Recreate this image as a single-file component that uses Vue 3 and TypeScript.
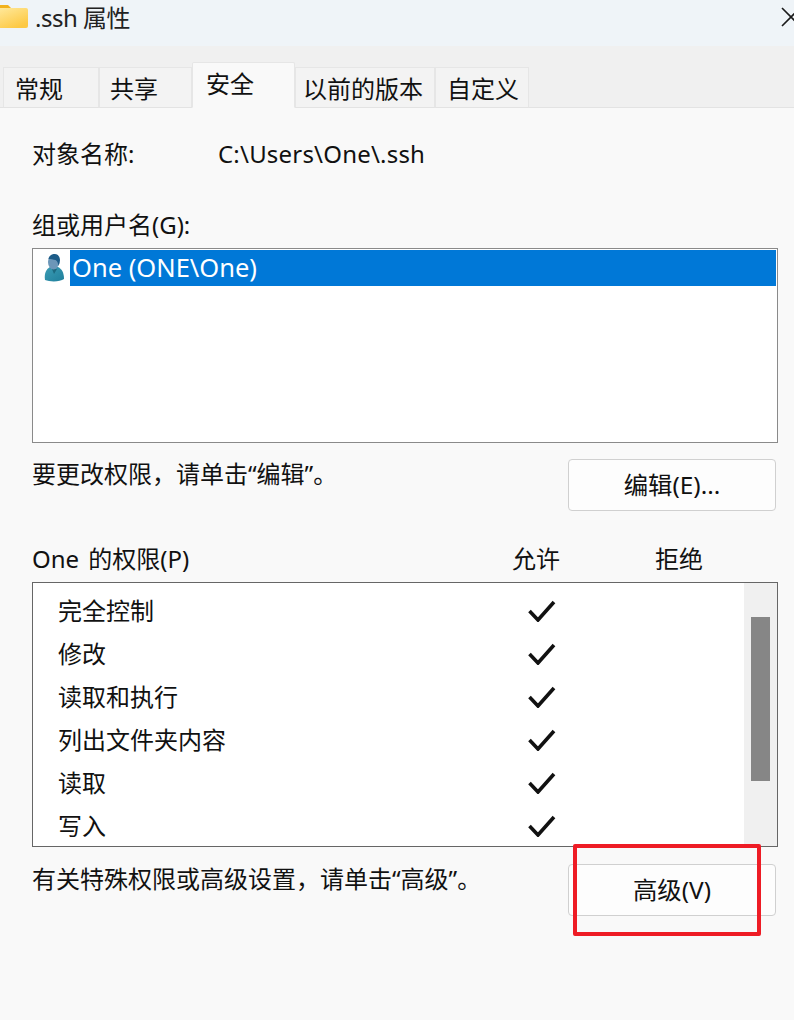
<script setup lang="ts">
interface Tab {
  label: string;
  width: number;
  pad: number;
  active?: boolean;
}

const tabs: Tab[] = [
  { label: '常规', width: 96, pad: 11 },
  { label: '共享', width: 93, pad: 10 },
  { label: '安全', width: 103, pad: 13, active: true },
  { label: '以前的版本', width: 140, pad: 7 },
  { label: '自定义', width: 94, pad: 11 }
];

const permissions: string[] = ['完全控制', '修改', '读取和执行', '列出文件夹内容', '读取', '写入'];
</script>

<template>
  <div class="dialog">
    <header class="titlebar">
      <svg class="folder" width="28" height="24" viewBox="0 0 28 24">
        <defs>
          <linearGradient id="fold" x1="0" y1="0" x2="0.6" y2="1">
            <stop offset="0" stop-color="#ffe99c" />
            <stop offset="1" stop-color="#fdc944" />
          </linearGradient>
        </defs>
        <path d="M0 0h8l4 4h-12z" fill="#f2b21e" />
        <rect x="-2" y="3" width="30" height="20" rx="2" fill="url(#fold)" />
      </svg>
      <span class="title">.ssh 属性</span>
      <svg class="close" width="20" height="20" viewBox="0 0 20 20">
        <path d="M1 1l18 18M1 19L19 1" stroke="#1a1a1a" stroke-width="1.6" fill="none" />
      </svg>
    </header>

    <nav class="tabs">
      <div
        v-for="tab in tabs"
        :key="tab.label"
        class="tab"
        :class="{ active: tab.active }"
        :style="{ width: tab.width + 'px', paddingLeft: tab.pad + 'px' }"
      >
        {{ tab.label }}
      </div>
    </nav>

    <main class="content">
      <div class="object-row">
        <span class="object-label">对象名称:</span>
        <span class="object-path">C:\Users\One\.ssh</span>
      </div>

      <div class="group-label">组或用户名(G):</div>
      <div class="user-list">
        <div class="user-row">
          <svg class="user-icon" width="20" height="28" viewBox="0 0 20 28">
            <defs>
              <linearGradient id="body" x1="0" y1="0" x2="1" y2="1">
                <stop offset="0" stop-color="#3c9cb4" />
                <stop offset="1" stop-color="#1f7f9c" />
              </linearGradient>
            </defs>
            <path d="M1 26c-1-6 1-11 5-13h8c4 2 6 6 6 12-4 3-14 3-19 1z" fill="url(#body)" />
            <path d="M8 15l2 5 3-5z" fill="#1d6a80" />
            <ellipse cx="9.5" cy="8" rx="5.5" ry="7.5" fill="#6c96b8" />
            <path d="M4.5 5C5 1.500 8 0 11 0s5 3 5 6c0 2-.5 4-1.500 6-.5-3-1-5-3-6-2-.5-5-1-7-1z" fill="#1d5c88" />
          </svg>
          <span class="user-name">One (ONE\One)</span>
        </div>
      </div>

      <div class="action-row edit-row">
        <span class="hint">要更改权限&#xFF0C;请单击“编辑”。</span>
        <button class="btn">编辑(E)...</button>
      </div>

      <div class="perm-head">
        <span class="perm-title">One 的权限(P)</span>
        <span class="perm-col allow">允许</span>
        <span class="perm-col deny">拒绝</span>
      </div>
      <div class="perm-box">
        <ul class="perm-list">
          <li v-for="name in permissions" :key="name" class="perm-row">
            <span class="perm-name">{{ name }}</span>
            <svg class="check" width="28" height="22" viewBox="0 0 28 22">
              <path d="M1.500 11l8.500 9L26 2" fill="none" stroke="#111" stroke-width="3.6" />
            </svg>
          </li>
        </ul>
        <div class="scrollbar">
          <div class="thumb"></div>
        </div>
      </div>

      <div class="action-row advanced-row">
        <span class="hint">有关特殊权限或高级设置&#xFF0C;请单击“高级”。</span>
        <button class="btn">高级(V)</button>
        <div class="highlight"></div>
      </div>
    </main>
  </div>
</template>

<style>
html,
body {
  margin: 0;
  background: #f9f9f9;
}
</style>

<style scoped>
.dialog {
  width: 794px;
  height: 1020px;
  overflow: hidden;
  background: #f9f9f9;
  color: #111;
  font-family: "Noto Sans", "Noto Sans CJK SC", sans-serif;
  font-size: 24px;
  line-height: 34px;
}

.titlebar {
  position: relative;
  height: 46px;
  background: #eff4f8;
  overflow: hidden;
  display: flex;
  align-items: center;
}

.folder {
  margin-right: 7px;
  margin-top: -12px;
}

.title {
  margin-top: -10px;
  color: #222;
  letter-spacing: -0.5px;
}

.close {
  position: absolute;
  left: 781px;
  top: 7px;
}

.tabs {
  height: 62px;
  box-sizing: border-box;
  padding-left: 3px;
  background: #f0f0f0;
  border-bottom: 1px solid #e3e3e3;
  display: flex;
  align-items: flex-end;
}

.tab {
  height: 41px;
  box-sizing: border-box;
  margin-bottom: -1px;
  padding-top: 3px;
  background: #f3f3f3;
  border: 1px solid #e6e6e6;
  border-bottom: 1px solid #e3e3e3;
  display: flex;
  align-items: center;
  line-height: 1;
}

.tab.active {
  height: 46px;
  padding-top: 0;
  padding-bottom: 3px;
  background: #f9f9f9;
  border-bottom-color: #f9f9f9;
  border-radius: 2px 2px 0 0;
}

.content {
  padding: 29px 16px 0 32px;
}

.object-row {
  display: flex;
  height: 34px;
}

.object-label {
  width: 186px;
}

.object-path {
  letter-spacing: 0.2px;
}

.group-label {
  margin-top: 37px;
  height: 34px;
}

.user-list {
  margin-top: 6px;
  height: 195px;
  box-sizing: border-box;
  background: #fff;
  border: 1px solid #8a8a8a;
  padding: 1px;
}

.user-row {
  display: flex;
  align-items: center;
  height: 36px;
}

.user-icon {
  margin-left: 10px;
  margin-right: 6px;
  flex: none;
}

.user-name {
  flex: 1;
  padding-left: 2px;
  background: #0078d7;
  color: #fff;
  height: 36px;
  font-size: 25.5px;
  line-height: 34px;
}

.action-row {
  display: flex;
  justify-content: space-between;
  align-items: flex-start;
}

.edit-row {
  margin-top: 16px;
}

.hint {
  margin-top: -2px;
}

.btn {
  width: 208px;
  height: 52px;
  margin-right: 2px;
  background: #fdfdfd;
  border: 1px solid #d0d0d0;
  border-radius: 4px;
  color: #111;
  font: inherit;
  font-size: 24.4px;
  line-height: 1;
  padding: 0;
}

.perm-head {
  position: relative;
  margin-top: 31px;
  height: 34px;
}

.perm-title {
  word-spacing: 3px;
}

.perm-col {
  position: absolute;
  top: 0;
}

.allow {
  left: 480px;
}

.deny {
  left: 623px;
}

.perm-box {
  margin-top: 6px;
  height: 265px;
  box-sizing: border-box;
  background: #fff;
  border: 1px solid #666;
  display: flex;
  overflow: hidden;
}

.perm-list {
  flex: 1;
  margin: 0;
  padding: 6px 0 0 25px;
  list-style: none;
}

.perm-row {
  height: 43px;
  display: flex;
  align-items: center;
}

.perm-name {
  width: 470px;
}

.scrollbar {
  width: 33px;
  background: #f0f0f0;
  flex: none;
}

.thumb {
  width: 19px;
  height: 164px;
  margin: 34px 0 0 7px;
  background: #868686;
}

.advanced-row {
  position: relative;
  margin-top: 17px;
}

.highlight {
  position: absolute;
  left: 541px;
  top: -20px;
  width: 188px;
  height: 92px;
  box-sizing: border-box;
  border: 4px solid #ee1c25;
  border-radius: 2px;
}
</style>
